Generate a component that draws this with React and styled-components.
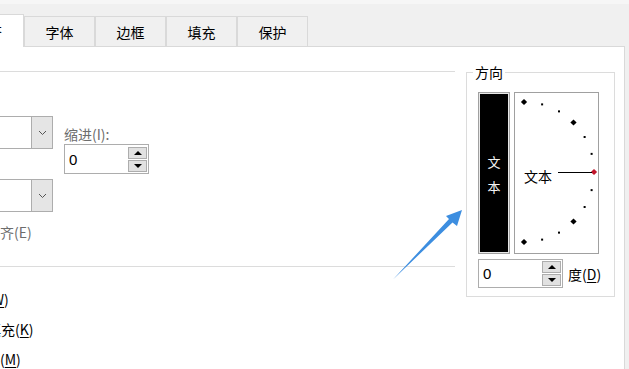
import React from 'react';
import styled, { createGlobalStyle } from 'styled-components';

const GlobalStyle = createGlobalStyle`
    body {
        margin: 0;
        font-family: "Microsoft YaHei", "Noto Sans CJK SC", sans-serif;
        color: #000;
    }
`

const Window = styled.div`
    position: relative;
    width: 629px;
    height: 369px;
    overflow: hidden;
    background: #f0f0f0;
    display: flex;
    flex-direction: column;
`

const TabStrip = styled.div`
    height: 46px;
    box-sizing: border-box;
    border-top: 4px solid #f6f6f6;
    display: flex;
    align-items: flex-end;
`

const Tab = styled.div`
    position: relative;
    z-index: 1;
    box-sizing: border-box;
    width: ${p => p.$active ? 72 : 71}px;
    height: ${p => p.$active ? 33 : 30}px;
    margin-left: ${p => p.$active ? -48 : 0}px;
    margin-bottom: ${p => p.$active ? -1 : 0}px;
    background: ${p => p.$active ? '#fff' : '#f0f0f0'};
    border: 1px solid #d9d9d9;
    border-bottom: none;
    border-left-color: ${p => p.$first ? 'transparent' : '#d9d9d9'};
    display: flex;
    align-items: center;
    justify-content: center;
    font-size: 14px;
`

const Panel = styled.div`
    flex: 1;
    width: 625px;
    box-sizing: border-box;
    background: #fff;
    border-top: 1px solid #d9d9d9;
    border-right: 1px solid #d9d9d9;
    display: flex;
`

const LeftArea = styled.div`
    width: 466px;
    display: flex;
    flex-direction: column;
`

const Separator = styled.div`
    width: 455px;
    height: 1px;
    background: #dcdcdc;
    margin-top: ${p => p.$top}px;
`

const AlignRow = styled.div`
    display: flex;
    margin-top: 44px;
`

const ComboColumn = styled.div`
    display: flex;
    flex-direction: column;
    gap: 30px;
`

const Combo = styled.div`
    width: 120px;
    height: 33px;
    margin-left: -67px;
    box-sizing: border-box;
    border: 1px solid #adadad;
    display: flex;
    justify-content: flex-end;
`

const DropButton = styled.div`
    width: 21px;
    box-sizing: border-box;
    background: #e5e5e5;
    border-left: 1px solid #adadad;
    display: flex;
    align-items: center;
    justify-content: center;
`

const IndentColumn = styled.div`
    margin-left: 11px;
    display: flex;
    flex-direction: column;
`

const Caption = styled.div`
    font-size: 14px;
    line-height: 20px;
    color: ${p => p.$dim ? '#6d6d6d' : '#000'};
    margin-left: ${p => -(p.$shift || 0)}px;
    margin-top: ${p => p.$top || 0}px;
    white-space: nowrap;
    u { text-underline-offset: 2px; }
`

const Spinner = styled.div`
    width: 85px;
    height: ${p => p.$h}px;
    box-sizing: border-box;
    border: 1px solid #adadad;
    background: #fff;
    display: flex;
    align-items: center;
    justify-content: space-between;
    padding: 0 1px 0 4px;
    font-family: "Liberation Sans", Arial, sans-serif;
    font-size: 15px;
`

const SpinButtons = styled.div`
    width: 19px;
    display: flex;
    flex-direction: column;
    gap: 1px;
`

const SpinButton = styled.div`
    height: 12px;
    box-sizing: border-box;
    background: #e1e1e1;
    border: 1px solid #adadad;
    display: flex;
    align-items: center;
    justify-content: center;
`

const Triangle = styled.div`
    width: 0;
    height: 0;
    border-left: 4px solid transparent;
    border-right: 4px solid transparent;
    ${p => p.$down ? 'border-top: 4px solid #000;' : 'border-bottom: 4px solid #000;'}
`

const Group = styled.div`
    position: relative;
    margin-top: 25px;
    width: 149px;
    height: 225px;
    box-sizing: border-box;
    border: 1px solid #dcdcdc;
    padding: 19px 0 0 11px;
`

const Legend = styled.span`
    position: absolute;
    top: -11px;
    left: 6px;
    padding: 0 2px;
    background: #fff;
    font-size: 14px;
    line-height: 20px;
`

const PreviewRow = styled.div`
    display: flex;
    gap: 4px;
`

const VerticalText = styled.div`
    width: 32px;
    height: 162px;
    box-sizing: border-box;
    background: #000;
    border: 1px solid #a0a0a0;
    box-shadow: inset 0 0 0 1px #e8e8e8;
    color: #f4f4f4;
    font-size: 13px;
    display: flex;
    flex-direction: column;
    align-items: center;
    justify-content: center;
    gap: 6px;
    padding-top: 2px;
`

const Dial = styled.div`
    width: 85px;
    height: 162px;
    box-sizing: border-box;
    border: 1px solid #a0a0a0;
    background: #fff;
    svg { display: block; }
`

const DegreeRow = styled.div`
    display: flex;
    align-items: center;
    gap: 5px;
    margin-top: 5px;
`

const Arrow = styled.svg`
    position: absolute;
    left: 0;
    top: 0;
    pointer-events: none;
`

const Chevron = () => (
    <svg width="9" height="6" viewBox="0 0 9 6">
        <path d="M1 1 L4.5 4.5 L8 1" fill="none" stroke="#555" strokeWidth="1" />
    </svg>
)

const Spin = ({ h }) => (
    <Spinner $h={h}>
        <span>0</span>
        <SpinButtons>
            <SpinButton><Triangle /></SpinButton>
            <SpinButton><Triangle $down /></SpinButton>
        </SpinButtons>
    </Spinner>
)

// dial marks every 15 degrees, radius 70 round (9,79)
const marks = [90, 75, 60, 45, 30, 15, 0, -15, -30, -45, -60, -75, -90].map(a => {
    const r = a * Math.PI / 180
    return { a, x: 9 + 70 * Math.cos(r), y: 79 - 70 * Math.sin(r) }
})

const DialFace = () => (
    <svg width="83" height="160" viewBox="0 0 83 160">
        {marks.map(m => m.a % 45 === 0 ? (
            <rect key={m.a} x={m.x - 2.2} y={m.y - 2.2} width="4.4" height="4.4"
                transform={`rotate(45 ${m.x} ${m.y})`} fill={m.a === 0 ? '#c0142a' : '#000'} />
        ) : (
            <rect key={m.a} x={m.x - 1} y={m.y - 1} width="2" height="2" fill="#000" />
        ))}
        <line x1="43" y1="79.5" x2="77" y2="79.5" stroke="#000" strokeWidth="1" />
        <text x="9" y="89" fontSize="14" fontFamily='"Noto Sans CJK SC", sans-serif'>文本</text>
    </svg>
)

export default function App() {
    return (
        <Window>
            <GlobalStyle />
            <TabStrip>
                <Tab $active $first>对齐</Tab>
                <Tab>字体</Tab>
                <Tab>边框</Tab>
                <Tab>填充</Tab>
                <Tab>保护</Tab>
            </TabStrip>
            <Panel>
                <LeftArea>
                    <Separator $top={24} />
                    <AlignRow>
                        <ComboColumn>
                            <Combo><DropButton><Chevron /></DropButton></Combo>
                            <Combo><DropButton><Chevron /></DropButton></Combo>
                        </ComboColumn>
                        <IndentColumn>
                            <Caption $dim $top={8}>缩进(I):</Caption>
                            <Spin h={30} />
                        </IndentColumn>
                    </AlignRow>
                    <Caption $dim $shift={42} $top={10}>分散对齐(E)</Caption>
                    <Separator $top={24} />
                    <Caption $shift={69} $top={22}>自动换行(<u>W</u>)</Caption>
                    <Caption $shift={69} $top={10}>缩小字体填充(<u>K</u>)</Caption>
                    <Caption $shift={70} $top={10}>合并单元格(<u>M</u>)</Caption>
                </LeftArea>
                <Group>
                    <Legend>方向</Legend>
                    <PreviewRow>
                        <VerticalText><span>文</span><span>本</span></VerticalText>
                        <Dial><DialFace /></Dial>
                    </PreviewRow>
                    <DegreeRow>
                        <Spin h={29} />
                        <Caption>度(<u>D</u>)</Caption>
                    </DegreeRow>
                </Group>
            </Panel>
            <Arrow width="629" height="369" viewBox="0 0 629 369">
                <polygon points="462,210 457,226 452.5,222.5 393,279.5 449,219 446,216" fill="#3d8ee0" />
            </Arrow>
        </Window>
    )
}
